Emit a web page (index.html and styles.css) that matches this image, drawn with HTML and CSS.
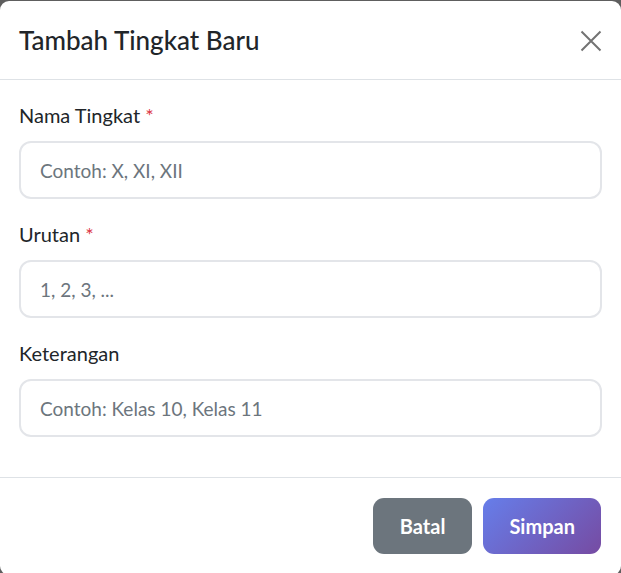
FILE: index.html
```html
<!DOCTYPE html>
<html lang="id">
<head>
<meta charset="utf-8">
<title>Tambah Tingkat Baru</title>
<link rel="stylesheet" href="styles.css">
</head>
<body>
<div class="modal">
  <div class="modal-header">
    <h5 class="modal-title">Tambah Tingkat Baru</h5>
    <button class="btn-close" type="button" aria-label="Close">
      <svg width="22" height="22" viewBox="0 0 22 22"><path d="M1.5 1.5 L20.5 20.5 M20.5 1.5 L1.5 20.5" stroke="#737373" stroke-width="2" fill="none"/></svg>
    </button>
  </div>
  <div class="modal-body">
    <div class="field">
      <label class="form-label">Nama Tingkat <span class="req">*</span></label>
      <input class="form-control" type="text" placeholder="Contoh: X, XI, XII">
    </div>
    <div class="field">
      <label class="form-label">Urutan <span class="req">*</span></label>
      <input class="form-control" type="text" placeholder="1, 2, 3, ...">
    </div>
    <div class="field">
      <label class="form-label">Keterangan</label>
      <input class="form-control" type="text" placeholder="Contoh: Kelas 10, Kelas 11">
    </div>
  </div>
  <div class="modal-footer">
    <button class="btn btn-secondary" type="button">Batal</button>
    <button class="btn btn-primary" type="button">Simpan</button>
  </div>
</div>
</body>
</html>
```
FILE: styles.css
```css
* { box-sizing: border-box; }
html, body { margin: 0; padding: 0; }
body {
  background: #5e5e5e;
  font-family: "Segoe UI", Lato, "Noto Sans", sans-serif;
  color: #212529;
  height: 573px;
  overflow: hidden;
}
.modal {
  margin-top: 1px;
  background: #fff;
  border-radius: 9px;
  height: 574px;
  display: flex;
  flex-direction: column;
}
.modal-header {
  height: 79px;
  border-bottom: 1px solid #dee2e6;
  padding: 2px 19px 0;
  display: flex;
  align-items: center;
  justify-content: space-between;
}
.modal-title {
  margin: 0;
  font-size: 26px;
  font-weight: 500;
  line-height: 1.2;
  color: #212529;
}
.btn-close {
  border: 0;
  background: transparent;
  padding: 0;
  width: 22px;
  height: 22px;
  display: flex;
}
.modal-body {
  padding: 22px 19px 18px;
}
.field {
  margin-bottom: 22px;
}
.form-label {
  display: block;
  font-size: 20px;
  line-height: 26px;
  margin-bottom: 13px;
  color: #212529;
}
.req { color: #dc3545; }
.form-control {
  display: block;
  width: 100%;
  height: 58px;
  border: 2px solid #e3e5e9;
  border-radius: 12px;
  padding: 0 19px;
  font-family: inherit;
  font-size: 19px;
  color: #212529;
  background: #fff;
  outline: none;
}
.form-control::placeholder { color: #6c757d; opacity: 1; }
.modal-footer {
  border-top: 1px solid #dee2e6;
  padding: 20px 20px 0;
  display: flex;
  justify-content: flex-end;
  gap: 11px;
}
.btn {
  height: 56px;
  border: 0;
  border-radius: 11px;
  padding: 0 26px;
  font-family: inherit;
  font-size: 20px;
  font-weight: 700;
  color: #fff;
}
.btn-secondary { background: #6c757d; padding: 0 27px; }
.btn-primary { background: linear-gradient(135deg, #667eea 0%, #764ba2 100%); }
```
